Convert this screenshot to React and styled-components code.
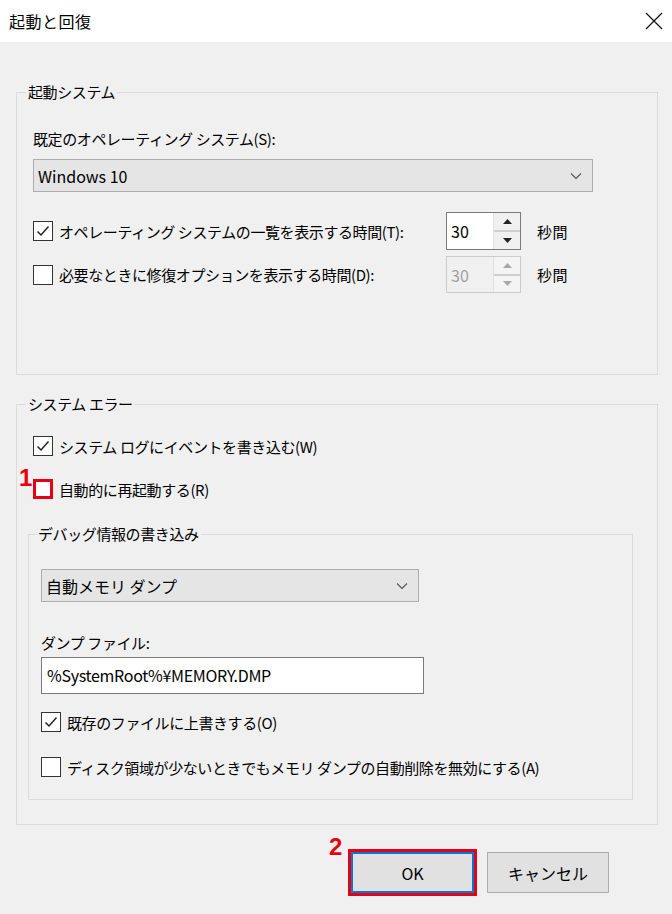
import React from "react";
import styled, {createGlobalStyle} from "styled-components";

const GlobalStyle = createGlobalStyle`
    body {
        margin: 0;
        background: #f0f0f0;
        font-family: "Noto Sans CJK JP", "Noto Sans", sans-serif;
        font-size: 15px;
        color: #000;
    }
`;

const Window = styled.div`
    width: 672px;
    height: 914px;
    background: #f0f0f0;
    display: flex;
    flex-direction: column;
`;

const TitleBar = styled.div`
    height: 42px;
    background: #fff;
    display: flex;
    align-items: center;
    justify-content: space-between;
    padding: 0 8px 0 9px;
    font-size: 16px;
    letter-spacing: 0.5px;
`;

const Body = styled.div`
    position: relative;
    padding: 50px 14px 0 16px;
    display: flex;
    flex-direction: column;
`;

const Group = styled.div`
    border: 1px solid #dcdcdc;
    height: ${p => p.$h}px;
    box-sizing: border-box;
    padding: ${p => p.$pad || "0 16px"};
    margin: ${p => p.$m || "0"};
    display: flex;
    flex-direction: column;
`;

const Legend = styled.span`
    margin: -11px 0 0 ${p => p.$ml || -7}px;
    padding: 0 2px;
    background: #f0f0f0;
    line-height: 20px;
    height: 20px;
    width: fit-content;
    letter-spacing: -0.4px;
`;

const Label = styled.div`
    margin-top: ${p => p.$mt}px;
    line-height: 20px;
    height: 20px;
    letter-spacing: -0.4px;
`;

const Select = styled.div`
    margin-top: ${p => p.$mt}px;
    width: ${p => p.$w}px;
    height: 33px;
    box-sizing: border-box;
    background: #e5e5e5;
    border: 1px solid #adadad;
    display: flex;
    align-items: center;
    justify-content: space-between;
    padding: 0 10px 0 4px;
    font-size: 16px;
`;

const Row = styled.div`
    margin-top: ${p => p.$mt}px;
    height: ${p => p.$h || 20}px;
    display: flex;
    align-items: center;
    padding-left: ${p => p.$pl || 0}px;
`;

const Box = styled.span`
    width: 20px;
    height: 20px;
    box-sizing: border-box;
    border: ${p => (p.$red ? "3px solid #e60012" : "1px solid #333")};
    background: #fff;
    display: flex;
    align-items: center;
    justify-content: center;
    flex-shrink: 0;
    margin-right: 6px;
`;

const RowText = styled.span`
    letter-spacing: -0.4px;
    white-space: nowrap;
    width: ${p => (p.$w ? `${p.$w}px` : "auto")};
    overflow: hidden;
`;

const Spin = styled.div`
    width: 75px;
    height: ${p => p.$h}px;
    box-sizing: border-box;
    border: 1px solid ${p => (p.$disabled ? "#cccccc" : "#7a7a7a")};
    background: ${p => (p.$disabled ? "#f0f0f0" : "#fff")};
    color: ${p => (p.$disabled ? "#a0a0a0" : "#000")};
    display: flex;
    margin-left: ${p => p.$ml}px;
    font-size: 16px;
`;

const SpinValue = styled.span`
    flex: 1;
    padding: 6px 0 0 4px;
`;

const SpinButtons = styled.div`
    width: 26px;
    display: flex;
    flex-direction: column;
    border-left: 1px solid #e0e0e0;
    background: ${p => (p.$disabled ? "#f4f4f4" : "#f0f0f0")};
`;

const SpinBtn = styled.div`
    flex: 1;
    display: flex;
    align-items: center;
    justify-content: center;
    border-bottom: ${p => (p.$top ? "2px solid #cfcfcf" : "none")};
`;

const Seconds = styled.span`
    margin-left: 16px;
    letter-spacing: 0.5px;
`;

const TextInput = styled.div`
    margin-top: 4px;
    width: 383px;
    height: 37px;
    box-sizing: border-box;
    border: 1px solid #7a7a7a;
    background: #fff;
    padding: 5px 0 0 5px;
    font-size: 16px;
    letter-spacing: -0.3px;
`;

const ButtonRow = styled.div`
    display: flex;
    justify-content: flex-end;
    gap: 13px;
    margin: 27px 49px 0 0;
`;

const Button = styled.div`
    width: ${p => p.$w}px;
    height: 41px;
    box-sizing: border-box;
    background: #e1e1e1;
    border: ${p => (p.$primary ? "2px solid #0078d7" : "1px solid #adadad")};
    outline: ${p => (p.$primary ? "3px solid #e60012" : "none")};
    display: flex;
    align-items: center;
    justify-content: center;
    font-size: 16px;
`;

const Marker = styled.span`
    position: absolute;
    left: ${p => p.$x}px;
    top: ${p => p.$y}px;
    color: #e60012;
    font-family: "Liberation Sans", sans-serif;
    font-weight: bold;
    font-size: 24px;
    line-height: 1;
`;

const Check = () => (
    <svg width="14" height="14" viewBox="0 0 14 14">
        <path d="M1.5 7.5 L5 11 L12.5 2.5" fill="none" stroke="#222" strokeWidth="1.5"/>
    </svg>
);

const Chevron = () => (
    <svg width="12" height="8" viewBox="0 0 12 8">
        <path d="M1 1.5 L6 6.5 L11 1.5" fill="none" stroke="#555" strokeWidth="1.1"/>
    </svg>
);

const Arrow = ({up, color}) => (
    <svg width="9" height="5" viewBox="0 0 9 5">
        <path d={up ? "M0 5 L4.5 0 L9 5 Z" : "M0 0 L4.5 5 L9 0 Z"} fill={color}/>
    </svg>
);

const SpinBox = ({value, h, ml, disabled}) => {
    const c = disabled ? "#a8a8a8" : "#222";
    return (
        <Spin $h={h} $ml={ml} $disabled={disabled}>
            <SpinValue>{value}</SpinValue>
            <SpinButtons $disabled={disabled}>
                <SpinBtn $top><Arrow up color={c}/></SpinBtn>
                <SpinBtn><Arrow color={c}/></SpinBtn>
            </SpinButtons>
        </Spin>
    );
};

const App = () => (
    <Window>
        <GlobalStyle/>
        <TitleBar>
            <span>起動と回復</span>
            <svg width="20" height="20" viewBox="0 0 20 20">
                <path d="M2 2 L18 18 M18 2 L2 18" stroke="#111" strokeWidth="1.2"/>
            </svg>
        </TitleBar>
        <Body>
            <Group $h={283}>
                <Legend>起動システム</Legend>
                <Label $mt={27}>既定のオペレーティング システム(S):</Label>
                <Select $mt={10} $w={560}>
                    <span>Windows 10</span>
                    <Chevron/>
                </Select>
                <Row $mt={20} $h={38}>
                    <Box><Check/></Box>
                    <RowText $w={350}>オペレーティング システムの一覧を表示する時間(T):</RowText>
                    <SpinBox value="30" h={38} ml={37}/>
                    <Seconds>秒間</Seconds>
                </Row>
                <Row $mt={6} $h={37}>
                    <Box/>
                    <RowText $w={350}>必要なときに修復オプションを表示する時間(D):</RowText>
                    <SpinBox value="30" h={37} ml={37} disabled/>
                    <Seconds>秒間</Seconds>
                </Row>
            </Group>
            <Group $h={421} $pad="0 24px 0 11px" $m="29px 0 0 0">
                <Legend $ml={-2}>システム エラー</Legend>
                <Row $mt={22} $pl={5}>
                    <Box><Check/></Box>
                    <RowText>システム ログにイベントを書き込む(W)</RowText>
                </Row>
                <Row $mt={23} $pl={5}>
                    <Box $red/>
                    <RowText>自動的に再起動する(R)</RowText>
                </Row>
                <Group $h={266} $pad="0 12px" $m="35px 0 0 0">
                    <Legend $ml={-5}>デバッグ情報の書き込み</Legend>
                    <Select $mt={25} $w={378}>
                        <span>自動メモリ ダンプ</span>
                        <Chevron/>
                    </Select>
                    <Label $mt={31}>ダンプ ファイル:</Label>
                    <TextInput>%SystemRoot%¥MEMORY.DMP</TextInput>
                    <Row $mt={18}>
                        <Box><Check/></Box>
                        <RowText>既存のファイルに上書きする(O)</RowText>
                    </Row>
                    <Row $mt={25}>
                        <Box/>
                        <RowText>ディスク領域が少ないときでもメモリ ダンプの自動削除を無効にする(A)</RowText>
                    </Row>
                </Group>
            </Group>
            <ButtonRow>
                <Button $w={123} $primary>OK</Button>
                <Button $w={122}>キャンセル</Button>
            </ButtonRow>
            <Marker $x={19} $y={424}>1</Marker>
            <Marker $x={329} $y={793}>2</Marker>
        </Body>
    </Window>
);

export default App;
